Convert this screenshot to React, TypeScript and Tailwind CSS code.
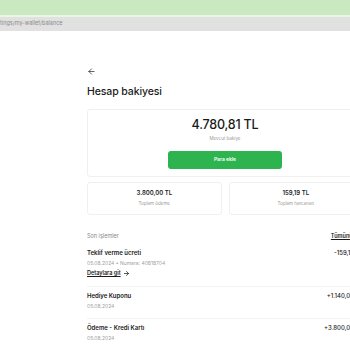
import { ArrowLeft, ArrowRight } from "lucide-react";

const transactions = [
  { title: "Teklif verme ücreti", meta: "05.08.2024 • Numara: 40818704", amount: "-159,19 TL", link: true },
  { title: "Hediye Kuponu", meta: "05.08.2024", amount: "+1.140,00 TL", link: false },
  { title: "Ödeme - Kredi Kartı", meta: "05.08.2024", amount: "+3.800,00 TL", link: false },
];

export default function App() {
  return (
    <div className="w-[350px] h-[350px] overflow-hidden bg-white font-['Inter',sans-serif] text-[#1a1a1a]">
      {/* browser chrome */}
      <div className="h-[15px] bg-[#cbe9c0]" />
      <div className="h-[2px] bg-[#eaf6e5]" />
      <div className="h-[14px] bg-[#e1e1e1] flex items-center">
        <span className="text-[5.5px] text-[#8a8a8a] leading-none">tings/my-wallet/balance</span>
      </div>

      <div className="ml-[87px] w-[276px] pt-[36px]">
        <ArrowLeft className="w-[9px] h-[9px] text-[#333]" strokeWidth={2} />

        <h1 className="mt-[11px] text-[10.5px] font-medium leading-none tracking-[-0.1px]">Hesap bakiyesi</h1>

        {/* balance card */}
        <div className="mt-[11px] h-[68px] border border-[#f0f0f0] rounded-[3px] flex flex-col items-center pt-[9px]">
          <p className="text-[12.5px] font-medium leading-none tracking-[-0.2px]">4.780,81 TL</p>
          <p className="mt-[6px] text-[4.5px] text-[#999] leading-none">Mevcut bakiye</p>
          <button className="mt-[9px] w-[114px] h-[18px] bg-[#2eb44f] rounded-[3px] text-white text-[5px] font-semibold">
            Para ekle
          </button>
        </div>

        {/* totals */}
        <div className="mt-[5px] grid grid-cols-2 gap-[7px]">
          <div className="h-[33px] border border-[#f0f0f0] rounded-[3px] flex flex-col items-center justify-center gap-[6px]">
            <p className="text-[6px] font-semibold leading-none">3.800,00 TL</p>
            <p className="text-[4.5px] text-[#999] leading-none">Toplam ödeme</p>
          </div>
          <div className="h-[33px] border border-[#f0f0f0] rounded-[3px] flex flex-col items-center justify-center gap-[6px]">
            <p className="text-[6px] font-semibold leading-none">159,19 TL</p>
            <p className="text-[4.5px] text-[#999] leading-none">Toplam harcanan</p>
          </div>
        </div>

        {/* recent */}
        <div className="mt-[19px] flex justify-between items-center">
          <span className="text-[5.5px] text-[#888] leading-none">Son işlemler</span>
          <span className="text-[5.5px] font-semibold underline leading-none">Tümünü gör</span>
        </div>

        <div className="mt-[5px]">
          {transactions.map((t, i) => (
            <div
              key={t.title}
              className={"flex justify-between pt-[6px] pb-[9px] " + (i < transactions.length - 1 ? "border-b border-[#f2f2f2]" : "")}
            >
              <div>
                <p className="text-[6px] font-semibold leading-none">{t.title}</p>
                <p className="mt-[5px] text-[5px] text-[#a0a0a0] leading-none">{t.meta}</p>
                {t.link && (
                  <p className="mt-[4px] flex items-center gap-[2px] text-[5.5px] font-semibold leading-none">
                    <span className="underline">Detaylara git</span>
                    <ArrowRight className="w-[7px] h-[7px]" strokeWidth={2.5} />
                  </p>
                )}
              </div>
              <span className="text-[6px] font-medium leading-none">{t.amount}</span>
            </div>
          ))}
        </div>
      </div>
    </div>
  );
}
